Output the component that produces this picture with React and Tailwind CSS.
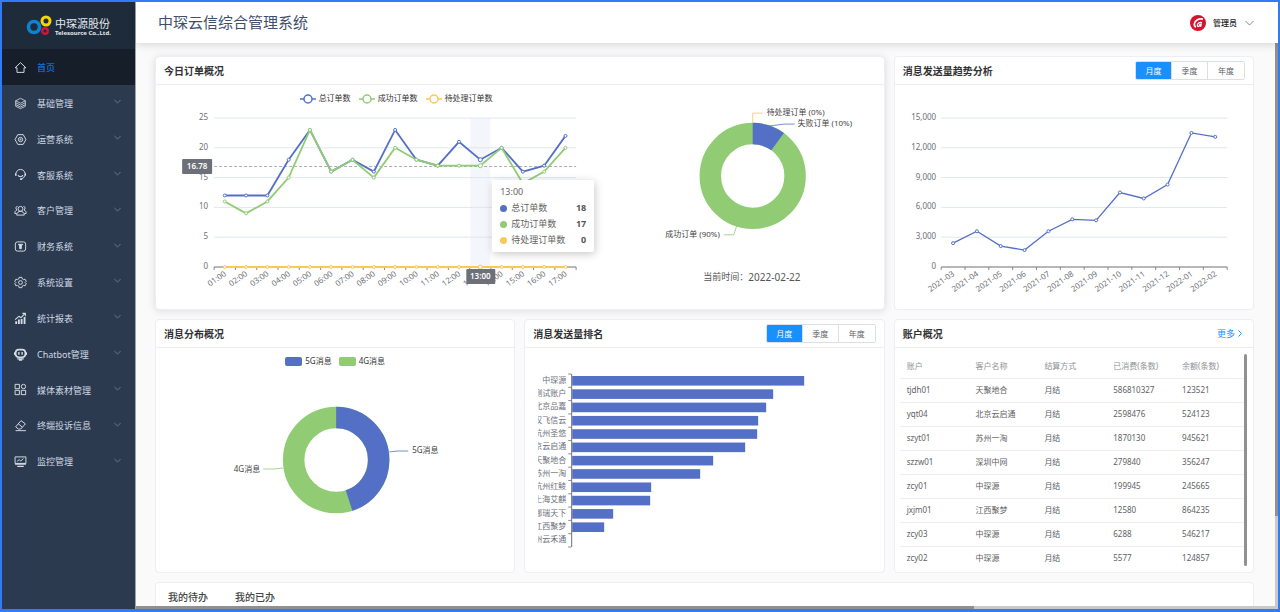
// src/App.jsx
import React, { useState } from "react";

const BLUE = "#5470c6";
const GREEN = "#91cc75";
const YELLOW = "#fac858";

const menuItems = [
  { icon: "home", label: "首页" },
  { icon: "layers", label: "基础管理" },
  { icon: "hexagon", label: "运营系统" },
  { icon: "headset", label: "客服系统" },
  { icon: "users", label: "客户管理" },
  { icon: "finance", label: "财务系统" },
  { icon: "gear", label: "系统设置" },
  { icon: "stats", label: "统计报表" },
  { icon: "robot", label: "Chatbot管理" },
  { icon: "media", label: "媒体素材管理" },
  { icon: "eraser", label: "终端投诉信息" },
  { icon: "monitor", label: "监控管理" },
];

const totalOrders = [12, 12, 12, 18, 23, 16, 18, 16, 23, 18, 17, 21, 18, 20, 16, 17, 22];
const doneOrders = [11, 9, 11, 15, 23, 16, 18, 15, 20, 18, 17, 17, 17, 20, 14, 16, 20];
const pendingOrders = totalOrders.map(() => 0);

const trend = [
  ["2021-03", 2400],
  ["2021-04", 3600],
  ["2021-05", 2100],
  ["2021-06", 1700],
  ["2021-07", 3600],
  ["2021-08", 4800],
  ["2021-09", 4700],
  ["2021-10", 7500],
  ["2021-11", 6900],
  ["2021-12", 8300],
  ["2022-01", 13500],
  ["2022-02", 13100],
];

const ranking = [
  ["中琛源", 232],
  ["测试账户", 201],
  ["北京品嘉", 194],
  ["汉飞信云", 186],
  ["杭州圣悠", 185],
  ["北京云启通", 173],
  ["天聚地合", 141],
  ["苏州一淘", 128],
  ["杭州红鲮", 79],
  ["上海艾麒", 78],
  ["娜瑞天下", 41],
  ["江西聚梦", 32],
  ["杭州云禾通", 0],
];

const accounts = [
  ["tjdh01", "天聚地合", "月结", "586810327", "123521"],
  ["yqt04", "北京云启通", "月结", "2598476", "524123"],
  ["szyt01", "苏州一淘", "月结", "1870130", "945621"],
  ["szzw01", "深圳中网", "月结", "279840", "356247"],
  ["zcy01", "中琛源", "月结", "199945", "245665"],
  ["jxjm01", "江西聚梦", "月结", "12580", "864235"],
  ["zcy03", "中琛源", "月结", "6288", "546217"],
  ["zcy02", "中琛源", "月结", "5577", "124857"],
];

export default function App() {
  return (
    <div className="flex h-screen overflow-hidden border-2 border-b-[3px] border-[#2f7cf6] bg-[#fafafa] font-['Noto_Sans','Noto_Sans_CJK_SC',sans-serif] text-[#333]">
      <Sidebar />
      <div className="flex min-w-0 flex-1 flex-col">
        <Header />
        <div className="flex min-h-0 flex-1">
          <main className="min-w-0 flex-1 overflow-hidden pt-[13px] pr-[21px] pl-[19px]">
            <div className="grid grid-cols-3 gap-[9px]">
              <OrdersCard />
              <TrendCard />
              <DistributionCard />
              <RankingCard />
              <AccountsCard />
              <TodoCard />
            </div>
          </main>
          {/* vertical scrollbar */}
          <div className="w-[3px] bg-[#c9c9c9]">
            <div className="h-[84%] bg-[#909090]" />
          </div>
        </div>
        {/* horizontal scrollbar */}
        <div className="h-[3px] bg-[#c9c9c9]">
          <div className="h-full w-[73.4%] bg-[#909090]" />
        </div>
      </div>
    </div>
  );
}

// === Sidebar ===
function Sidebar() {
  return (
    <aside className="w-[134px] shrink-0 border-r border-[#9aa5b1] bg-[#2b3a4f]">
      <div className="flex h-[47px] items-center bg-[#1e2b3a] pl-6">
        <svg className="h-6 w-7 shrink-0" viewBox="0 0 28 24" fill="none">
          <circle cx="8" cy="13" r="5.500" stroke="#0a84d0" strokeWidth="3.6" />
          <circle cx="20" cy="7" r="4" stroke="#f6d500" strokeWidth="3" />
          <circle cx="19" cy="17" r="2.8" stroke="#d4123c" strokeWidth="2.4" />
        </svg>
        <div className="whitespace-nowrap pt-[3px] pl-px text-[#e3e8ee]">
          <div className="text-[11px] leading-3">中琛源股份</div>
          <div className="text-[6px] leading-[7px] font-bold">Telesource Co.,Ltd.</div>
        </div>
      </div>
      <nav className="grid h-[430px] auto-rows-fr">
        {menuItems.map((item, i) => (
          <a
            key={item.label}
            href="#"
            className={`flex items-center pt-px pr-[14px] pl-3 text-[9px] ${
              i === 0 ? "bg-[#151e29] text-[#1684fc]" : "text-[#d0d8e2]"
            }`}
          >
            <MenuIcon name={item.icon} />
            <span className="flex-1 pt-px pl-[10px]">{item.label}</span>
            {i > 0 && <Chevron className="mb-[3px] h-[5px] w-[7px] text-[#7d8a9a]" />}
          </a>
        ))}
      </nav>
    </aside>
  );
}

// === Header ===
function Header() {
  return (
    <header className="relative z-10 flex h-[41px] shrink-0 items-center justify-between bg-white pr-6 pl-[22px] shadow-[0_2px_8px_rgba(0,0,0,0.14)]">
      <h1 className="text-[15px] text-[#3f4f6b]">中琛云信综合管理系统</h1>
      <button className="flex items-center text-[8px] font-medium text-[#222]">
        <svg className="h-4 w-4" viewBox="0 0 16 16">
          <circle cx="8" cy="8" r="8" fill="#d9102f" />
          <path
            d="M13 4.200C8.500 3.200 4.600 5.500 4.300 9c-.1 1.500.5 2.600 1.500 3.200"
            fill="none"
            stroke="#fff"
            strokeWidth="1.800"
          />
          <path
            d="M12 7.600c-2.600-.5-4.600.7-4.700 2.900 0 1.300 1.800 1.300 2.200.1l.4-1.500M11.300 8.500l-.8 3.300"
            fill="none"
            stroke="#fff"
            strokeWidth="1.300"
          />
        </svg>
        <span className="pr-2 pl-[7px]">管理员</span>
        <Chevron className="h-[6px] w-[9px] text-[#888]" />
      </button>
    </header>
  );
}

// === Card ===
function Card({ title, extra, className = "", children }) {
  return (
    <section className={`min-w-0 rounded-sm border border-[#ebeef5] bg-white ${className}`}>
      <div className="flex h-7 items-center justify-between border-b border-[#ebeef5] px-2">
        <h2 className="pt-px text-[10px] font-bold text-[#303133]">{title}</h2>
        {extra}
      </div>
      {children}
    </section>
  );
}

// === Period Switch ===
function PeriodSwitch() {
  const [active, setActive] = useState("月度");
  return (
    <div className="flex divide-x divide-[#dcdfe6] overflow-hidden rounded-xs border border-[#dcdfe6] text-[8px] leading-[17px]">
      {["月度", "季度", "年度"].map((label) => (
        <button
          key={label}
          onClick={() => setActive(label)}
          className={`w-9 ${active === label ? "bg-[#1890ff] text-white" : "bg-white text-[#606266]"}`}
        >
          {label}
        </button>
      ))}
    </div>
  );
}

// === Orders ===
function OrdersCard() {
  return (
    <Card
      title="今日订单概况"
      className="col-span-2 shadow-[0_1px_8px_rgba(0,0,0,0.12)]"
    >
      <div className="flex h-[224px]">
        <div className="relative w-[66%]">
          <div className="mt-[7px] mb-px flex h-3 items-center justify-center gap-2 text-[8px]">
            <LineLegend color={BLUE} label="总订单数" />
            <LineLegend color={GREEN} label="成功订单数" />
            <LineLegend color={YELLOW} label="待处理订单数" />
          </div>
          <OrdersChart />
          <OrdersTooltip />
        </div>
        <div className="flex flex-1 flex-col items-center pr-4">
          <OrdersDonut />
          <div className="mt-[25px] flex items-center text-[9px] leading-[14px] text-[#555]">
            <span>当前时间：</span>
            <time className="text-[10px]">2022-02-22</time>
          </div>
        </div>
      </div>
    </Card>
  );
}

function LineLegend({ color, label }) {
  return (
    <span className="flex items-center gap-[3px]">
      <svg className="h-[11px] w-4" viewBox="0 0 16 11">
        <path d="M0 6h16" stroke={color} strokeWidth="1.5" />
        <circle cx="8" cy="6" r="4" fill="#fff" stroke={color} strokeWidth="1.500" />
      </svg>
      {label}
    </span>
  );
}

function OrdersChart() {
  const step = 362 / 17;
  const x = (i) => 58 + step * (i + 0.5);
  const y = (v) => 162 - v * 5.96;
  const series = [
    [totalOrders, BLUE],
    [doneOrders, GREEN],
    [pendingOrders, YELLOW],
  ];

  return (
    <svg className="h-[204px] w-full" viewBox="0 0 480 204" fontSize="8">
      <rect x={x(12) - 10} y="13" width="20" height="149" fill="#f4f6fc" />
      {[0, 5, 10, 15, 20, 25].map((v) => (
        <g key={v}>
          {v > 0 && <path d={`M58 ${y(v)}h362`} stroke="#e0e6f1" />}
          <text x="52" y={y(v) + 2} textAnchor="end" fill="#6e7079">{v}</text>
        </g>
      ))}
      <path d="M58 162h362" stroke="#6e7079" />
      {Array.from({ length: 18 }, (_, i) => (
        <path key={i} d={`M${58 + step * i} 162v3`} stroke="#6e7079" strokeWidth="0.8" />
      ))}
      {totalOrders.map((_, i) => (
        <text
          key={i}
          textAnchor="end"
          fill="#6e7079"
          transform={`translate(${x(i) + 2} 170) rotate(-35)`}
        >
          {`${String(i + 1).padStart(2, "0")}:00`}
        </text>
      ))}
      <path d="M58 61.500h362" stroke="#999" strokeDasharray="3 2" strokeWidth="0.8" />
      {series.map(([data, color]) => (
        <g key={color} fill="none" stroke={color}>
          <polyline points={data.map((v, i) => `${x(i)},${y(v)}`).join(" ")} strokeWidth="1.8" />
          {data.map((v, i) => (
            <circle key={i} cx={x(i)} cy={y(v)} r={i === 12 ? 2 : 1.5} fill="#fff" />
          ))}
        </g>
      ))}
      <g textAnchor="middle" fontWeight="600">
        <rect x="26" y="54" width="30" height="15" rx="1" fill="#6e7079" />
        <text x="41" y="64" fill="#fff">16.78</text>
        <rect x={x(12) - 14} y="164" width="29" height="15" rx="1" fill="#6e7079" />
        <text x={x(12)} y="174" fill="#fff">13:00</text>
      </g>
    </svg>
  );
}

function OrdersTooltip() {
  const rows = [
    ["bg-[#5470c6]", "总订单数", 18],
    ["bg-[#91cc75]", "成功订单数", 17],
    ["bg-[#fac858]", "待处理订单数", 0],
  ];
  return (
    <div className="absolute top-[95px] left-[70%] w-[102px] rounded-xs bg-white px-2 py-1 text-[9px] leading-4 text-[#666] shadow-[1px_2px_8px_rgba(0,0,0,0.22)]">
      <div>13:00</div>
      {rows.map(([dot, label, value]) => (
        <div key={label} className="flex items-center">
          <span className={`mr-1 h-[7px] w-[7px] rounded-full ${dot}`} />
          <span className="flex-1 whitespace-nowrap">{label}</span>
          <b className="text-[#555]">{value}</b>
        </div>
      ))}
    </div>
  );
}

// === Donuts ===
function Ring({ cx, cy, share }) {
  // first slice is blue and starts at twelve o'clock
  const length = 2 * Math.PI * 42.5;
  return (
    <g fill="none" strokeWidth="21.500" transform={`rotate(-90 ${cx} ${cy})`}>
      <circle cx={cx} cy={cy} r="42.5" stroke={GREEN} />
      <circle cx={cx} cy={cy} r="42.5" stroke={BLUE} strokeDasharray={`${length * share} ${length}`} />
    </g>
  );
}

function OrdersDonut() {
  return (
    <svg className="h-[160px] w-full" viewBox="0 0 232 160" fontSize="8" fill="#444">
      <Ring cx={117} cy={91} share={0.1} />
      <g fill="none">
        <path d="M117 38V28h10" stroke={YELLOW} strokeWidth="0.8" />
        <path d="M133 41l15-2h11" stroke={BLUE} strokeWidth="0.8" />
        <path d="M88 150h10l3-9" stroke={GREEN} strokeWidth="0.800" />
      </g>
      <text x="131" y="30">待处理订单 (0%)</text>
      <text x="162" y="41">失败订单 (10%)</text>
      <text x="84" y="152" textAnchor="end">成功订单 (90%)</text>
    </svg>
  );
}

function DistributionCard() {
  return (
    <Card title="消息分布概况">
      <div className="mt-[7px] mb-px flex h-3 items-center justify-center gap-[7px] text-[8px]">
        <span className="flex items-center gap-[3px]">
          <i className="h-[9px] w-[17px] rounded-xs bg-[#5470c6]" />
          5G消息
        </span>
        <span className="flex items-center gap-[3px]">
          <i className="h-[9px] w-[17px] rounded-xs bg-[#91cc75]" />
          4G消息
        </span>
      </div>
      <svg className="h-[204px] w-full" viewBox="0 0 358 204" fontSize="8" fill="#444">
        <Ring cx={180} cy={92} share={0.45} />
        <g fill="none" strokeWidth="0.8">
          <path d="M233 84l8-1h11" stroke={BLUE} />
          <path d="M107 101h11l9-1" stroke={GREEN} />
        </g>
        <text x="256" y="85">5G消息</text>
        <text x="104" y="104" textAnchor="end">4G消息</text>
      </svg>
    </Card>
  );
}

// === Trend ===
function TrendCard() {
  const step = 286 / 12;
  const x = (i) => 46 + step * (i + 0.5);
  const y = (v) => 182 - (v * 149) / 15000;
  return (
    <Card title="消息发送量趋势分析" extra={<PeriodSwitch />}>
      <svg className="h-[224px] w-full" viewBox="0 0 358 224" fontSize="8">
        {[0, 3000, 6000, 9000, 12000, 15000].map((v) => (
          <g key={v}>
            {v > 0 && <path d={`M46 ${y(v)}h286`} stroke="#e0e6f1" />}
            <text x="41" y={y(v) + 2} textAnchor="end" fill="#6e7079">
              {v.toLocaleString("en-US")}
            </text>
          </g>
        ))}
        <path d="M46 182h286" stroke="#6e7079" />
        {Array.from({ length: 13 }, (_, i) => (
          <path key={i} d={`M${46 + step * i} 182v3`} stroke="#6e7079" strokeWidth="0.8" />
        ))}
        {trend.map(([month], i) => (
          <text
            key={month}
            textAnchor="end"
            fill="#6e7079"
            transform={`translate(${x(i) + 2} 190) rotate(-35)`}
          >
            {month}
          </text>
        ))}
        <g fill="none" stroke={BLUE}>
          <polyline points={trend.map(([, v], i) => `${x(i)},${y(v)}`).join(" ")} strokeWidth="1.3" />
          {trend.map(([month, v], i) => (
            <circle key={month} cx={x(i)} cy={y(v)} r="1.5" fill="#fff" />
          ))}
        </g>
      </svg>
    </Card>
  );
}

// === Ranking ===
function RankingCard() {
  const step = 173 / 13;
  return (
    <Card title="消息发送量排名" extra={<PeriodSwitch />}>
      <svg className="h-[224px] w-full" viewBox="0 0 358 224" fontSize="8">
        <clipPath id="rank-labels">
          <rect x="13" y="0" width="30" height="224" />
        </clipPath>
        <path d="M46.500 26v173" stroke="#6e7079" />
        {Array.from({ length: 14 }, (_, i) => (
          <path key={i} d={`M43 ${26 + step * i}h3`} stroke="#6e7079" strokeWidth="0.8" />
        ))}
        <g clipPath="url(#rank-labels)" fill="#6e7079" textAnchor="end">
          {ranking.map(([name], i) => (
            <text key={name} x="41" y={26 + step * (i + 0.5) + 2}>{name}</text>
          ))}
        </g>
        {ranking.map(([name, width], i) => (
          <rect key={name} x="47" y={28 + step * i} width={width} height="9.600" fill={BLUE} />
        ))}
      </svg>
    </Card>
  );
}

// === Accounts ===
function AccountsCard() {
  return (
    <Card
      title="账户概况"
      extra={
        <a href="#" className="flex items-center gap-[3px] pr-[3px] text-[9px] text-[#1890ff]">
          更多
          <svg className="h-[7px] w-1" viewBox="0 0 4 7" fill="none" stroke="currentColor">
            <path d="M.5.5l3 3-3 3" />
          </svg>
        </a>
      }
    >
      <div className="flex items-start pt-[6px] pr-[6px] pl-[5px]">
        <table className="w-full table-fixed text-left text-[8px] leading-3 text-[#606266]">
          <thead>
            <tr className="h-6 border-b border-[#ebeef5] text-[#909399]">
              {["账户", "客户名称", "结算方式", "已消费(条数)", "余额(条数)"].map((name) => (
                <th key={name} className="pl-[7px] font-normal whitespace-nowrap">{name}</th>
              ))}
            </tr>
          </thead>
          <tbody>
            {accounts.map((row) => (
              <tr key={row[0]} className="h-6 border-b border-[#ebeef5] last:border-0">
                {row.map((cell, i) => (
                  <td key={i} className="pl-[7px]">{cell}</td>
                ))}
              </tr>
            ))}
          </tbody>
        </table>
        <div className="h-[212px] w-[3px] shrink-0 rounded-full bg-[#909090]" />
      </div>
    </Card>
  );
}

// === Todo ===
function TodoCard() {
  return (
    <section className="col-span-3 h-20 rounded-sm border border-[#ebeef5] bg-white">
      <div className="flex h-7 items-center gap-[27px] px-3 text-[10px] font-medium text-[#444]">
        <button>我的待办</button>
        <button>我的已办</button>
      </div>
    </section>
  );
}

// === Icons ===
function Chevron({ className }) {
  return (
    <svg className={className} viewBox="0 0 9 6" fill="none" stroke="currentColor">
      <path d="M.5 1l4 4 4-4" />
    </svg>
  );
}

function MenuIcon({ name }) {
  return (
    <svg
      className="h-[13px] w-[13px] shrink-0 text-[#d5dce5]"
      viewBox="0 0 24 24"
      fill="none"
      stroke="currentColor"
      strokeWidth="1.8"
      strokeLinejoin="round"
    >
      {iconShapes[name]}
    </svg>
  );
}

const iconShapes = {
  home: <path d="M12 3L2 12.500h3.500V21h13v-8.500H22z" />,
  layers: (
    <path d="M12 2.500l9 4.500-9 4.500L3 7zM3 7v3.500l9 4.500 9-4.500V7M3 10.500V14l9 4.500 9-4.500v-3.500M3 14v3l9 4.500 9-4.500v-3" strokeWidth="1.5" />
  ),
  hexagon: (
    <>
      <path d="M7 3h10l5 9-5 9H7l-5-9z" />
      <circle cx="12" cy="12" r="4" />
      <circle cx="12" cy="12" r="1" />
    </>
  ),
  headset: (
    <>
      <path d="M4 14a8.500 8.500 0 1116 0M20 14a8.500 8.500 0 01-6 6" />
      <path d="M3 9.500v5M21 9.500v5M7.500 13.500c1.500 3.500 7 3.500 9 0" strokeWidth="2.200" />
      <path d="M11 20.500h4" strokeWidth="3" />
    </>
  ),
  users: (
    <>
      <circle cx="12" cy="9" r="4.500" />
      <path d="M5 20.500c0-9.500 14-9.500 14 0zM6.500 4.500C3 4 2.500 9.500 5.500 11 2.500 12 1.500 14 1.500 17.500H5M17.500 4.500c3.500-.5 4 5 1 6.500 3 1 4 3 4 6.500H19" />
    </>
  ),
  finance: (
    <>
      <rect x="2.500" y="3.500" width="19" height="17" rx="4" />
      <path d="M8 8h8l-2.500 3v5h-3v-5z" fill="currentColor" />
    </>
  ),
  gear: (
    <>
      <path d="M9.500 2.500h5l.8 3 2.200 1.200 3-.8 2 4-2 2.100 2 2.100-2 4-3-.8-2.200 1.200-.8 3h-5l-.8-3-2.200-1.200-3 .8-2-4 2-2.100-2-2.100 2-4 3 .8 2.200-1.200z" />
      <circle cx="12" cy="12" r="3.500" />
    </>
  ),
  stats: (
    <>
      <path d="M4 22v-5M9 22v-8M14 22v-9M19.500 22V9" strokeWidth="3.400" />
      <path d="M2 14l7-6 4 2.500L20 3M15.500 2.500H21V8" strokeWidth="2" />
    </>
  ),
  robot: (
    <>
      <rect x="3" y="3" width="18" height="14" rx="6" strokeWidth="3" />
      <path d="M9 7.500v5M15 7.500v5" strokeWidth="2.500" />
      <path d="M1 8v5M23 8v5M6 20h12M9 22.500h6" strokeWidth="2.200" />
    </>
  ),
  media: (
    <>
      <rect x="2" y="2.500" width="8" height="8" />
      <circle cx="17.500" cy="6.500" r="4" />
      <rect x="2" y="13.500" width="8" height="8" />
      <rect x="13.500" y="13.500" width="8" height="8" />
    </>
  ),
  eraser: (
    <>
      <path d="M13 3l8 6-8.500 9.500H8L3 14.500zM8 9l7.500 6" />
      <path d="M3 21.500h19" />
    </>
  ),
  monitor: (
    <>
      <path d="M2 3.500h20v12H2z" />
      <path d="M5.500 12l4-3.500 3 2.500 5-4.500" />
      <path d="M2 16.500h20M6 21h12" strokeWidth="2.600" />
    </>
  ),
};
